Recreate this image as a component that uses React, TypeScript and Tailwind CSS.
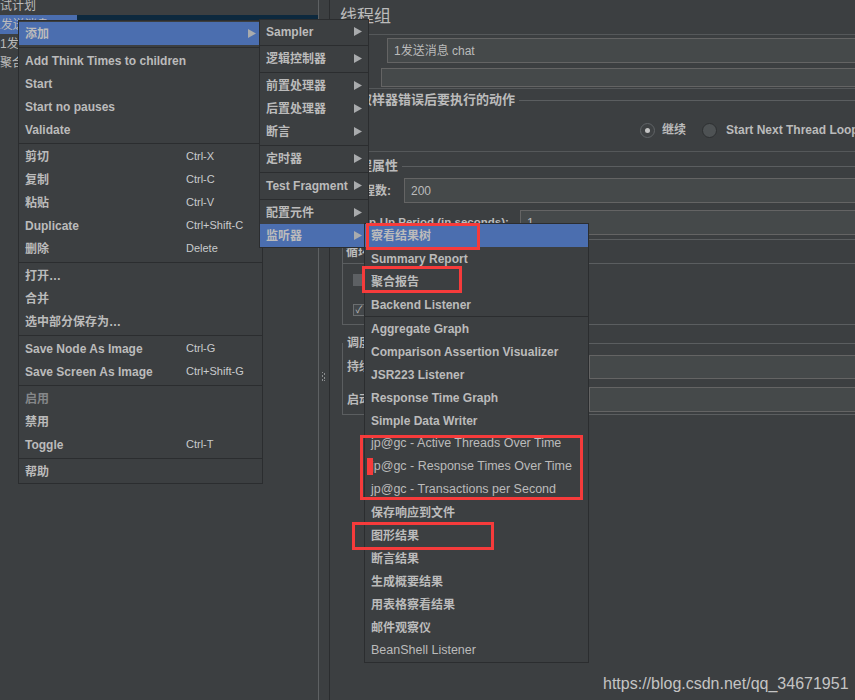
import React from "react";

type Row =
  | { sep: true; thin?: boolean }
  | { label: string; key?: string; arrow?: boolean; active?: boolean; dim?: boolean; thin?: boolean; sep?: false };

const mainItems: Row[] = [
  { label: "添加", arrow: true, active: true },
  { sep: true },
  { label: "Add Think Times to children" },
  { label: "Start" },
  { label: "Start no pauses" },
  { label: "Validate" },
  { sep: true },
  { label: "剪切", key: "Ctrl-X" },
  { label: "复制", key: "Ctrl-C" },
  { label: "粘贴", key: "Ctrl-V" },
  { label: "Duplicate", key: "Ctrl+Shift-C" },
  { label: "删除", key: "Delete" },
  { sep: true },
  { label: "打开…" },
  { label: "合并" },
  { label: "选中部分保存为…" },
  { sep: true },
  { label: "Save Node As Image", key: "Ctrl-G" },
  { label: "Save Screen As Image", key: "Ctrl+Shift-G" },
  { sep: true },
  { label: "启用", dim: true },
  { label: "禁用" },
  { label: "Toggle", key: "Ctrl-T" },
  { sep: true },
  { label: "帮助" },
];

const addItems: Row[] = [
  { label: "Sampler", arrow: true },
  { sep: true },
  { label: "逻辑控制器", arrow: true },
  { sep: true },
  { label: "前置处理器", arrow: true },
  { label: "后置处理器", arrow: true },
  { label: "断言", arrow: true },
  { sep: true },
  { label: "定时器", arrow: true },
  { sep: true },
  { label: "Test Fragment", arrow: true },
  { sep: true },
  { label: "配置元件", arrow: true },
  { label: "监听器", arrow: true, active: true },
];

const listenerItems: Row[] = [
  { label: "察看结果树", active: true },
  { label: "Summary Report" },
  { label: "聚合报告" },
  { label: "Backend Listener" },
  { sep: true, thin: true },
  { label: "Aggregate Graph" },
  { label: "Comparison Assertion Visualizer" },
  { label: "JSR223 Listener" },
  { label: "Response Time Graph" },
  { label: "Simple Data Writer" },
  { label: "jp@gc - Active Threads Over Time", thin: true },
  { label: "jp@gc - Response Times Over Time", thin: true },
  { label: "jp@gc - Transactions per Second", thin: true },
  { label: "保存响应到文件" },
  { label: "图形结果" },
  { label: "断言结果" },
  { label: "生成概要结果" },
  { label: "用表格察看结果" },
  { label: "邮件观察仪" },
  { label: "BeanShell Listener", thin: true },
];

const Arrow = () => (
  <svg width="8" height="9" viewBox="0 0 8 9" className="shrink-0">
    <polygon points="0,0 8,4.5 0,9" fill="#a9abad" />
  </svg>
);

const Menu = ({ items, className, labelW }: { items: Row[]; className: string; labelW?: string }) => (
  <div className={`absolute bg-[#3c3f41] border border-[#2b2d2f] ${className}`}>
    {items.map((it, i) =>
      it.sep ? (
        it.thin ? (
          <div key={i} className="h-px bg-[#2b2d2f]" />
        ) : (
          <div key={i} className="h-[4px] flex items-center">
            <div className="h-px w-full bg-[#2b2d2f]" />
          </div>
        )
      ) : (
        <div
          key={i}
          className={`h-[23px] flex items-center pl-[6px] pr-[6px] whitespace-nowrap ${it.active ? "bg-[#4b6eaf]" : ""}`}
        >
          <span
            className={`${labelW ?? ""} ${it.thin ? "font-normal text-[12.5px]" : "font-bold"} ${
              it.dim ? "text-[#858789]" : "text-[#bbbbbb]"
            }`}
          >
            {it.label}
          </span>
          {it.key && <span className="text-[11px] text-[#c9cbcd]">{it.key}</span>}
          {it.arrow && (
            <span className="ml-auto">
              <Arrow />
            </span>
          )}
        </div>
      )
    )}
  </div>
);

const Field = ({ className, children }: { className?: string; children?: React.ReactNode }) => (
  <div className={`flex-1 -mr-[6px] bg-[#45494a] border border-[#646464] flex items-center pl-[6px] font-normal ${className ?? ""}`}>
    {children}
  </div>
);

const GroupTitle = ({ text, className }: { text: string; className?: string }) => (
  <div className={`h-[20px] flex items-center ${className ?? ""}`}>
    <span className="font-bold text-[13px] pl-[6px] pr-[4px]">{text}</span>
    <div className="flex-1 h-px bg-[#5b5e60]" />
  </div>
);

const Radio = ({ on }: { on?: boolean }) =>
  on ? (
    <div className="w-[15px] h-[15px] rounded-full border border-[#606467] bg-[#3e4143] flex items-center justify-center shrink-0">
      <div className="w-[5px] h-[5px] rounded-full bg-[#c4c4c4]" />
    </div>
  ) : (
    <div className="w-[15px] h-[15px] rounded-full border border-[#2d2f31] bg-[#4e5254] shrink-0" />
  );

export default function App() {
  return (
    <div
      className="relative w-[855px] h-[700px] overflow-hidden bg-[#3c3f41] flex text-[12px] text-[#bbbbbb]"
      style={{ fontFamily: '"Liberation Sans", "Noto Sans CJK SC", sans-serif' }}
    >
      {/* tree */}
      <div className="w-[318px] shrink-0">
        <div className="h-[19px] -mt-[4px] flex items-center -ml-[12px] whitespace-nowrap">测试计划</div>
        <div className="h-[19px] flex bg-[#0d293e] whitespace-nowrap">
          <span className="-ml-[6px] pr-[2px] bg-[#4b6eaf] flex items-center">1发送消息 chat</span>
        </div>
        <div className="h-[19px] flex items-center whitespace-nowrap">1发送消息 chat</div>
        <div className="h-[19px] flex items-center whitespace-nowrap">聚合报告</div>
      </div>

      {/* splitter */}
      <div className="w-[12px] shrink-0 border-l border-[#5e6163] border-r border-r-[#2b2d2f] flex flex-col items-center">
        <svg width="4" height="9" viewBox="0 0 4 9" className="mt-[372px]">
          {[0, 2, 4, 6, 8].map((y) => (
            <React.Fragment key={y}>
              <rect x={y % 4 === 0 ? 0 : 2} y={y} width="1" height="1" fill="#8c8e90" />
              <rect x={y % 4 === 0 ? 2 : 0} y={y + 1 > 8 ? 8 : y + 1} width="1" height="1" fill="#8c8e90" />
            </React.Fragment>
          ))}
        </svg>
      </div>

      {/* form */}
      <div className="flex-1 min-w-0 overflow-hidden pl-[10px] flex flex-col">
        <div className="h-[35px] border-b border-[#55585a] text-[17px] pt-[4px]">线程组</div>
        <div className="mt-[3px] h-[25px] flex items-center">
          <span className="w-[47px] font-bold">名称:</span>
          <Field className="h-[25px]">1发送消息 chat</Field>
        </div>
        <div className="mt-[5px] h-[19px] flex items-center">
          <span className="w-[41px] font-bold">注释:</span>
          <Field className="h-[19px] border-[#45494a]" />
        </div>
        <div className="mt-[1px] h-px bg-[#55585a]" />
        <GroupTitle text="在取样器错误后要执行的动作" className="mt-px" />
        <div className="mt-[10px] h-[20px] flex items-center pl-[300px] whitespace-nowrap font-bold">
          <Radio on />
          <span className="ml-[7px]">继续</span>
          <div className="ml-[16px]">
            <Radio />
          </div>
          <span className="ml-[9px]">Start Next Thread Loop</span>
          <div className="ml-[16px]">
            <Radio />
          </div>
          <span className="ml-[8px]">停止线程</span>
        </div>
        <div className="mt-[11px] h-px bg-[#55585a]" />
        <GroupTitle text="线程属性" className="mt-[4px]" />
        <div className="mt-[2px] h-[25px] flex items-center">
          <span className="w-[64px] pl-[11px] font-bold">线程数:</span>
          <Field className="h-[25px]">200</Field>
        </div>
        <div className="mt-[7px] h-[25px] flex items-center">
          <span className="w-[180px] pl-[4px] font-bold text-[11.5px] whitespace-nowrap">Ramp-Up Period (in seconds):</span>
          <Field className="h-[25px]">1</Field>
        </div>
        <div className="mt-[4px] ml-[2px] h-[86px] border border-[#5b5e60] border-r-0 flex flex-col pl-[10px]">
          <div className="h-[24px] flex items-center border-b border-[#5b5e60] -ml-[10px] pl-[3px] font-bold">循环次数</div>
          <div className="mt-[10px] h-[12px] flex items-center">
            <div className="w-[12px] h-[12px] bg-[#5d6063]" />
            <span className="ml-[6px] font-bold">Same user on each iteration</span>
          </div>
          <div className="mt-[18px] h-[12px] flex items-center">
            <div className="w-[12px] h-[12px] bg-[#43474a] border border-[#6b6e70] flex items-center justify-center text-[10px] leading-none text-[#bbbbbb]">✓</div>
            <span className="ml-[6px] font-bold">延迟创建线程直到需要</span>
          </div>
        </div>
        <div className="mt-[18px] ml-[2px] h-[72px] border-l border-b border-[#5b5e60] relative">
          <div className="absolute -top-[9px] left-[4px] right-0 flex items-center">
            <span className="font-bold pr-[4px]">调度器配置</span>
            <div className="flex-1 h-px bg-[#5b5e60]" />
          </div>
          <div className="mt-[12px] h-[24px] flex items-center">
            <span className="w-[246px] pl-[4px] font-bold">持续时间（秒）</span>
            <Field className="h-[24px]" />
          </div>
          <div className="mt-[8px] h-[25px] flex items-center">
            <span className="w-[246px] pl-[4px] font-bold">启动延迟（秒）</span>
            <Field className="h-[25px]" />
          </div>
        </div>
      </div>

      <Menu items={mainItems} labelW="w-[161px]" className="left-[18px] top-[20px] w-[245px] pt-px z-10" />
      <Menu items={addItems} className="left-[259px] top-[19px] w-[110px] z-20" />
      <Menu items={listenerItems} className="left-[364px] top-[223px] w-[225px] z-30" />

      {/* annotations */}
      <div className="absolute z-40 left-[366px] top-[223px] w-[114px] h-[27px] border-[3px] border-[#f63b3b]" />
      <div className="absolute z-40 left-[362px] top-[266px] w-[100px] h-[27px] border-[3px] border-[#f63b3b]" />
      <div className="absolute z-40 left-[360px] top-[435px] w-[223px] h-[65px] border-[3px] border-[#f63b3b]" />
      <div className="absolute z-40 left-[367px] top-[458px] w-[6px] h-[17px] bg-[#f63b3b]" />
      <div className="absolute z-40 left-[352px] top-[522px] w-[142px] h-[28px] border-[3px] border-[#f63b3b]" />

      <div className="absolute z-40 left-[603px] top-[672px] text-[16px] text-[#c4c4c4] font-normal" style={{ fontFamily: '"Liberation Sans", Arial, sans-serif' }}>
        https://blog.csdn.net/qq_34671951
      </div>
    </div>
  );
}
